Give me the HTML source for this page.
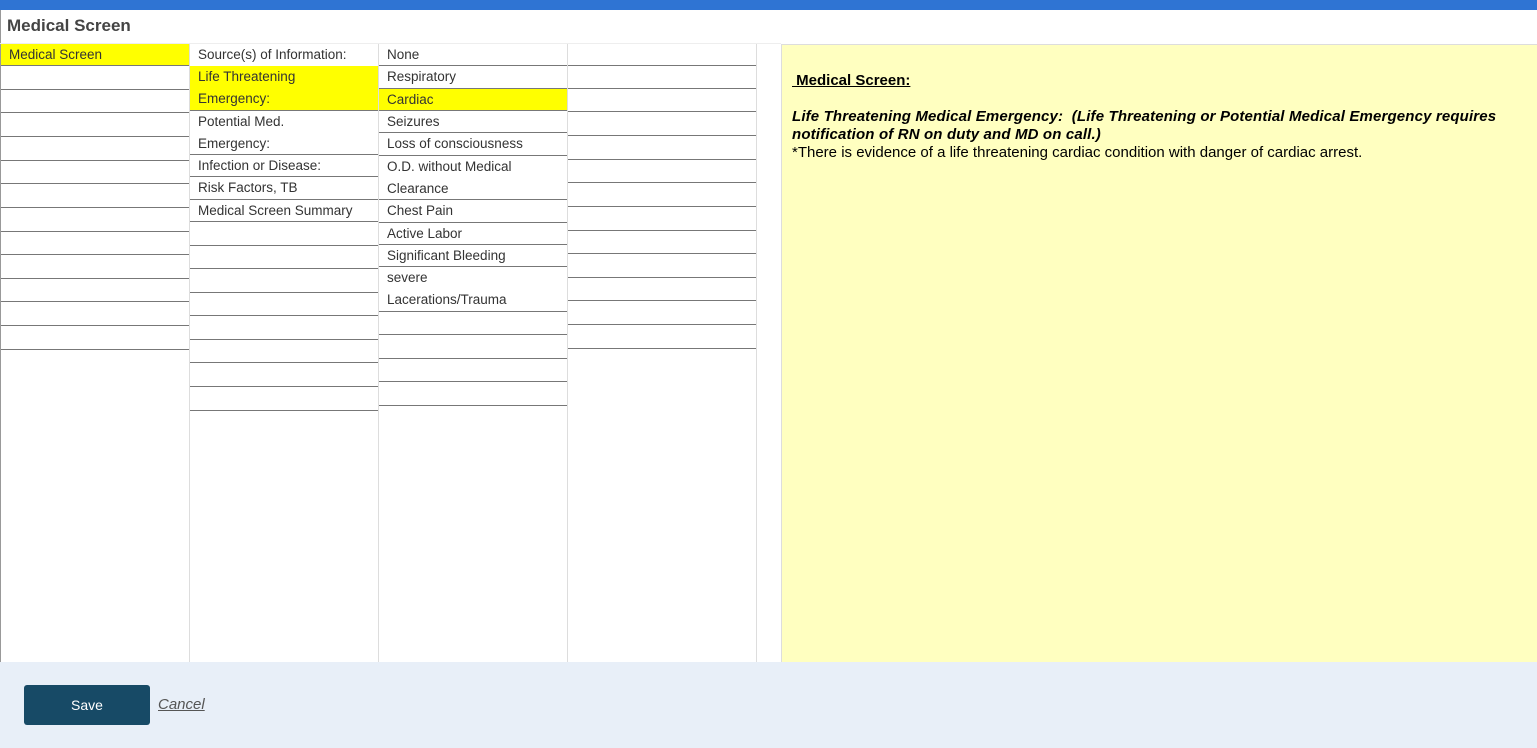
<!DOCTYPE html>
<html><head><style>
*{margin:0;padding:0;box-sizing:border-box}
body{width:1537px;height:748px;position:relative;background:#fff;font-family:"Liberation Sans",sans-serif;overflow:hidden}
.c{position:absolute;font-size:13.5px;color:#333;padding-left:8px;line-height:22px;border-bottom:1px solid #777}
.y{background:#ffff00}
.col{position:absolute;top:44px;height:618px;border-right:1px solid #ddd}
</style></head><body>
<div style="position:absolute;left:0;top:0;width:1537px;height:10px;background:#2f74d3"></div>
<div style="position:absolute;left:7px;top:16px;font-size:17px;font-weight:bold;color:#444">Medical Screen</div>
<div style="position:absolute;left:0;top:10px;width:1px;height:738px;background:#999"></div>
<div class="col" style="left:0;width:190px"></div>
<div class="col" style="left:190px;width:189px"></div>
<div class="col" style="left:379px;width:189px"></div>
<div class="col" style="left:568px;width:189px"></div>
<div style="position:absolute;left:0;top:43px;width:781px;height:1px;background:#eee"></div>

<!-- col1 -->
<div class="c y" style="left:1px;top:44px;width:188px;height:22px">Medical Screen</div>
<div class="c" style="left:1px;top:66px;width:188px;height:24px"></div>
<div class="c" style="left:1px;top:90px;width:188px;height:23px"></div>
<div class="c" style="left:1px;top:113px;width:188px;height:24px"></div>
<div class="c" style="left:1px;top:137px;width:188px;height:24px"></div>
<div class="c" style="left:1px;top:161px;width:188px;height:23px"></div>
<div class="c" style="left:1px;top:184px;width:188px;height:24px"></div>
<div class="c" style="left:1px;top:208px;width:188px;height:24px"></div>
<div class="c" style="left:1px;top:232px;width:188px;height:23px"></div>
<div class="c" style="left:1px;top:255px;width:188px;height:24px"></div>
<div class="c" style="left:1px;top:279px;width:188px;height:23px"></div>
<div class="c" style="left:1px;top:302px;width:188px;height:24px"></div>
<div class="c" style="left:1px;top:326px;width:188px;height:24px"></div>

<!-- col2 -->
<div class="c" style="left:190px;top:44px;width:188px;height:22px;border-bottom:none">Source(s) of Information:</div>
<div class="c y" style="left:190px;top:66px;width:188px;height:45px">Life Threatening<br>Emergency:</div>
<div class="c" style="left:190px;top:111px;width:188px;height:44px">Potential Med.<br>Emergency:</div>
<div class="c" style="left:190px;top:155px;width:188px;height:22px">Infection or Disease:</div>
<div class="c" style="left:190px;top:177px;width:188px;height:23px">Risk Factors, TB</div>
<div class="c" style="left:190px;top:200px;width:188px;height:22px">Medical Screen Summary</div>
<div class="c" style="left:190px;top:222px;width:188px;height:24px"></div>
<div class="c" style="left:190px;top:246px;width:188px;height:23px"></div>
<div class="c" style="left:190px;top:269px;width:188px;height:24px"></div>
<div class="c" style="left:190px;top:293px;width:188px;height:23px"></div>
<div class="c" style="left:190px;top:316px;width:188px;height:24px"></div>
<div class="c" style="left:190px;top:340px;width:188px;height:23px"></div>
<div class="c" style="left:190px;top:363px;width:188px;height:24px"></div>
<div class="c" style="left:190px;top:387px;width:188px;height:24px"></div>

<!-- col3 -->
<div class="c" style="left:379px;top:44px;width:188px;height:22px">None</div>
<div class="c" style="left:379px;top:66px;width:188px;height:23px">Respiratory</div>
<div class="c y" style="left:379px;top:89px;width:188px;height:22px">Cardiac</div>
<div class="c" style="left:379px;top:111px;width:188px;height:22px">Seizures</div>
<div class="c" style="left:379px;top:133px;width:188px;height:23px">Loss of consciousness</div>
<div class="c" style="left:379px;top:156px;width:188px;height:44px">O.D. without Medical<br>Clearance</div>
<div class="c" style="left:379px;top:200px;width:188px;height:23px">Chest Pain</div>
<div class="c" style="left:379px;top:223px;width:188px;height:22px">Active Labor</div>
<div class="c" style="left:379px;top:245px;width:188px;height:22px">Significant Bleeding</div>
<div class="c" style="left:379px;top:267px;width:188px;height:45px">severe<br>Lacerations/Trauma</div>
<div class="c" style="left:379px;top:312px;width:188px;height:23px"></div>
<div class="c" style="left:379px;top:335px;width:188px;height:24px"></div>
<div class="c" style="left:379px;top:359px;width:188px;height:23px"></div>
<div class="c" style="left:379px;top:382px;width:188px;height:24px"></div>

<!-- col4 -->
<div class="c" style="left:568px;top:44px;width:188px;height:22px"></div>
<div class="c" style="left:568px;top:66px;width:188px;height:23px"></div>
<div class="c" style="left:568px;top:89px;width:188px;height:23px"></div>
<div class="c" style="left:568px;top:112px;width:188px;height:24px"></div>
<div class="c" style="left:568px;top:136px;width:188px;height:24px"></div>
<div class="c" style="left:568px;top:160px;width:188px;height:23px"></div>
<div class="c" style="left:568px;top:183px;width:188px;height:24px"></div>
<div class="c" style="left:568px;top:207px;width:188px;height:24px"></div>
<div class="c" style="left:568px;top:231px;width:188px;height:23px"></div>
<div class="c" style="left:568px;top:254px;width:188px;height:24px"></div>
<div class="c" style="left:568px;top:278px;width:188px;height:23px"></div>
<div class="c" style="left:568px;top:301px;width:188px;height:24px"></div>
<div class="c" style="left:568px;top:325px;width:188px;height:24px"></div>

<!-- right panel -->
<div style="position:absolute;left:781px;top:44px;width:756px;height:618px;background:#ffffc0;border-left:1px solid #ddd;border-top:1px solid #ddd;padding:27px 0 0 10px;font-size:15px;color:#000;line-height:18px">
<div style="font-weight:bold;text-decoration:underline">&nbsp;Medical Screen:</div>
<div style="height:18px"></div>
<div style="font-weight:bold;font-style:italic;letter-spacing:0.15px;width:740px">Life Threatening Medical Emergency:&nbsp; (Life Threatening or Potential Medical Emergency requires notification of RN on duty and MD on call.)</div>
<div>*There is evidence of a life threatening cardiac condition with danger of cardiac arrest.</div>
</div>

<!-- footer -->
<div style="position:absolute;left:0;top:662px;width:1537px;height:86px;background:#e8eff8"></div>
<div style="position:absolute;left:24px;top:685px;width:126px;height:40px;background:#174a66;border-radius:3px;color:#fff;font-size:14px;line-height:40px;text-align:center">Save</div>
<div style="position:absolute;left:158px;top:696px;font-size:15px;color:#555;font-style:italic;text-decoration:underline">Cancel</div>
</body></html>
